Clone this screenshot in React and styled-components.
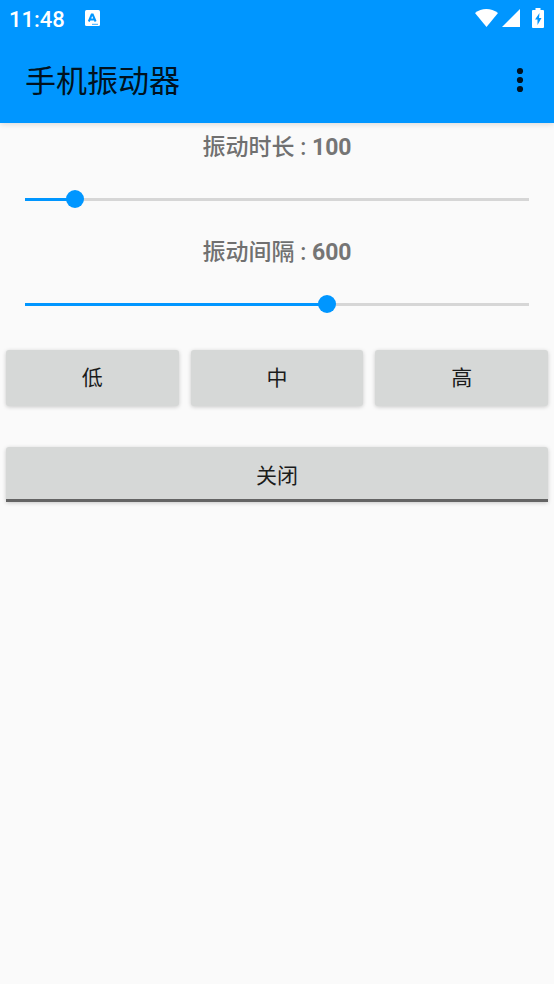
import React, { useState } from "react";
import styled, { createGlobalStyle } from "styled-components";

const GlobalStyle = createGlobalStyle`
*{
    box-sizing:border-box;
    margin:0;
    padding:0;
}
body{
    background:#fafafa;
    font-family:Roboto, "Noto Sans CJK SC", sans-serif;
}
`

const Header = styled.header`
background:#0096ff;
box-shadow:0 1px 6px rgba(0,0,0,0.15);
`

const StatusBar = styled.div`
display:flex;
align-items:center;
justify-content:space-between;
height:36px;
padding:0 10px 0 9px;
color:#fff;
`

const Notifications = styled.div`
display:flex;
align-items:center;
gap:20px;
`

const Clock = styled.span`
padding-top:4px;
font-size:22px;
line-height:26px;
font-weight:500;
`

const StatusIcons = styled.div`
display:flex;
align-items:center;
gap:4px;
`

const Battery = styled.svg`
margin-left:8px;
`

const Toolbar = styled.div`
display:flex;
align-items:center;
justify-content:space-between;
height:87px;
padding:0 16px 0 25px;
`

const Title = styled.h1`
padding-top:5px;
font-size:31px;
line-height:44px;
font-weight:400;
color:#001220;
`

const MenuButton = styled.button`
display:flex;
border:none;
background:none;
color:#001220;
cursor:pointer;
`

const Main = styled.main`
padding:9px 6px;
`

const Setting = styled.div`
display:flex;
flex-direction:column;
`

const Label = styled.label`
font-size:23px;
line-height:31px;
font-weight:500;
text-align:center;
color:#707070;
`

const Value = styled.span`
font-weight:700;
color:#757575;
`

const Slider = styled.input`
appearance:none;
height:74px;
margin:-1px 10px 1px;
background:
    linear-gradient(#0096ff, #0096ff) 9px center / calc((100% - 18px) * var(--level)) 3px no-repeat,
    linear-gradient(#d6d6d6, #d6d6d6) center / calc(100% - 18px) 3px no-repeat;
cursor:pointer;
&::-webkit-slider-thumb{
    appearance:none;
    width:18px;
    height:18px;
    border-radius:50%;
    background:#0096ff;
}
`

const Levels = styled.div`
display:grid;
grid-template-columns:repeat(3, 1fr);
gap:12px;
margin:8px 0 41px;
`

const Button = styled.button`
width:100%;
height:56px;
border:none;
border-radius:3px;
background:#d6d8d7;
box-shadow:0 1px 4px rgba(0,0,0,0.2);
font-family:inherit;
font-size:21px;
line-height:30px;
color:#1a1b1b;
cursor:pointer;
`

const ToggleButton = styled(Button)`
height:55px;
padding-top:5px;
border-bottom:3px solid #646464;
border-radius:3px 3px 0 0;
`

function VibrationSetting({ id, name, initial }) {
    const [value, setValue] = useState(initial)
    return (
        <Setting>
            <Label htmlFor={id}>{name} : <Value>{value}</Value></Label>
            <Slider
                id={id}
                type="range"
                min="0"
                max="1000"
                value={value}
                style={{ "--level": value / 1000 }}
                onChange={(e) => setValue(Number(e.target.value))}
            />
        </Setting>
    )
}

export default function App() {
    return (
        <>
            <GlobalStyle />
            <Header>
                <StatusBar>
                    <Notifications>
                        <Clock>11:48</Clock>
                        <svg width="15" height="16" viewBox="0 0 15 16">
                            <rect width="15" height="16" rx="1.5" fill="#fff" />
                            <path d="M3.800 11.500 6.700 4.500H7.700L10.600 11.500M5 9.500h4.500" fill="none" stroke="#0096ff" strokeWidth="2" />
                            <path d="M7 14.300h6" stroke="#0096ff" strokeWidth="0.8" />
                        </svg>
                    </Notifications>
                    <StatusIcons>
                        <svg width="24" height="18" viewBox="0 0 24 18">
                            <path d="M1 4C7.500-1.300 17-1.300 24 4L12.500 18Z" fill="#fff" />
                        </svg>
                        <svg width="18" height="18" viewBox="0 0 18 18">
                            <path d="M18 0V18H0Z" fill="#fff" />
                        </svg>
                        <Battery width="12" height="20" viewBox="0 0 12 20">
                            <path d="M3.500 0h5v2H11q1 0 1 1v16q0 1-1 1H1q-1 0-1-1V3q0-1 1-1h2.500Z" fill="#fff" />
                            <path d="M7.500 5 3 11.500h2.500V17L9.500 10H7Z" fill="#0096ff" />
                        </Battery>
                    </StatusIcons>
                </StatusBar>
                <Toolbar>
                    <Title>手机振动器</Title>
                    <MenuButton aria-label="更多选项">
                        <svg width="36" height="36" viewBox="0 0 36 36" fill="currentColor">
                            <circle cx="18" cy="9" r="3.1" />
                            <circle cx="18" cy="18" r="3.1" />
                            <circle cx="18" cy="27" r="3.1" />
                        </svg>
                    </MenuButton>
                </Toolbar>
            </Header>
            <Main>
                <VibrationSetting id="duration" name="振动时长" initial={100} />
                <VibrationSetting id="interval" name="振动间隔" initial={600} />
                <Levels>
                    <Button>低</Button>
                    <Button>中</Button>
                    <Button>高</Button>
                </Levels>
                <ToggleButton>关闭</ToggleButton>
            </Main>
        </>
    )
}
